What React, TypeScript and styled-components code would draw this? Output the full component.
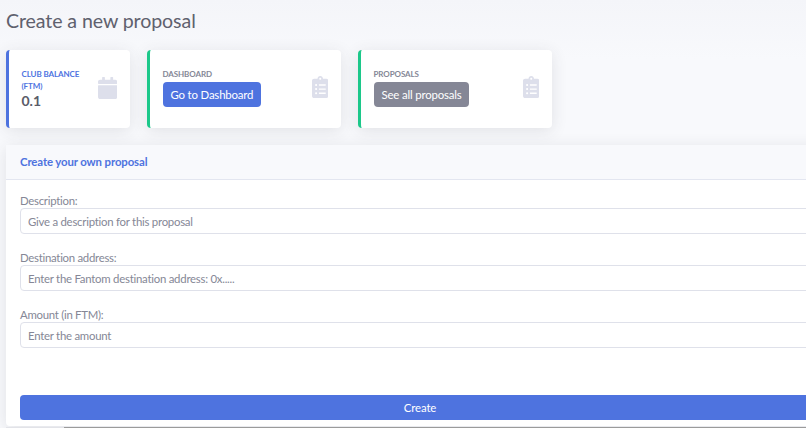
import React from "react";
import styled, { createGlobalStyle } from "styled-components";

const Global = createGlobalStyle`
  html, body { margin: 0; padding: 0; background: #f8f9fc; overflow: hidden; }
  * { box-sizing: border-box; }
`;

const Page = styled.div`
  width: 806px;
  height: 428px;
  overflow: hidden;
  display: flex;
  flex-direction: column;
  padding: 0 0 0 6px;
  font-family: "Lato", "Noto Sans", sans-serif;
  color: #858796;
  background: linear-gradient(#f4f5f9 0, #f8f9fc 60px);
`;

const Title = styled.h1`
  margin: 9px 0 0;
  height: 24px;
  font-size: 19.6px;
  line-height: 24px;
  font-weight: 400;
  letter-spacing: -0.1px;
  color: #5f616e;
`;

const CardRow = styled.div`
  display: flex;
  gap: 17px;
  margin-top: 17px;
`;

const StatCard = styled.div<{ $accent: string; $width: number }>`
  width: ${(p) => p.$width}px;
  height: 78px;
  flex: none;
  display: flex;
  align-items: center;
  justify-content: space-between;
  padding: 0 13px 0 12.5px;
  background: #fff;
  border-left: 3.5px solid ${(p) => p.$accent};
  border-radius: 4px;
  box-shadow: 0 3px 16px rgba(58, 59, 69, 0.12);
`;

const StatBody = styled.div`
  display: flex;
  flex-direction: column;
  align-items: flex-start;
`;

const StatLabel = styled.div<{ $primary?: boolean }>`
  font-size: 8px;
  line-height: 11.5px;
  font-weight: 700;
  letter-spacing: -0.1px;
  text-transform: uppercase;
  color: ${(p) => (p.$primary ? "#4e73df" : "#858796")};
`;

const StatValue = styled.div`
  font-size: 14px;
  line-height: 18px;
  margin-bottom: -1px;
  font-weight: 700;
  color: #5a5c69;
`;

const LinkButton = styled.a<{ $bg: string }>`
  display: block;
  height: 25px;
  margin: 1px 0 2px;
  padding: 0 8px;
  font-size: 11.4px;
  line-height: 25px;
  letter-spacing: -0.17px;
  color: #fff;
  background: ${(p) => p.$bg};
  border-radius: 4px;
`;

const IconSlot = styled.svg<{ $width: number; $lift: number }>`
  width: ${(p) => p.$width}px;
  height: 22px;
  margin-bottom: ${(p) => p.$lift}px;
  flex: none;
  fill: #dddfeb;
`;

const FormCard = styled.section`
  width: 828px;
  flex: none;
  margin-top: 17px;
  padding-bottom: 6px;
  background: #fff;
  border-radius: 4px 0 0 4px;
  box-shadow: 0 3px 16px rgba(58, 59, 69, 0.12);
`;

const FormHeader = styled.header`
  height: 35px;
  padding: 0 14px 1px;
  display: flex;
  align-items: center;
  background: #f8f9fc;
  border-bottom: 1px solid #e3e6f0;
  font-size: 11.4px;
  letter-spacing: -0.12px;
  font-weight: 700;
  color: #4e73df;
`;

const FormBody = styled.form`
  display: flex;
  flex-direction: column;
  padding: 13px 14px 0;
`;

const Field = styled.label`
  display: flex;
  flex-direction: column;
  height: 57px;
  font-size: 11.4px;
  line-height: 15px;
  letter-spacing: -0.28px;
  color: #858796;
`;

const Input = styled.input`
  width: 100%;
  height: 26px;
  flex: none;
  padding: 0 7px;
  font: inherit;
  letter-spacing: -0.25px;
  color: #6e707e;
  background: #fff;
  border: 1px solid #dfe1ea;
  border-radius: 4px;
  outline: none;
  &::placeholder { color: #858796; opacity: 1; }
`;

const Submit = styled.button`
  width: 100%;
  height: 25px;
  margin-top: 31px;
  padding: 0;
  font: inherit;
  font-size: 11.4px;
  letter-spacing: -0.1px;
  color: #fff;
  background: #4e73df;
  border: none;
  border-radius: 4px;
`;

const CutOffEdge = styled.div`
  height: 1px;
  flex: none;
  margin: auto 0 0 0;
  background: linear-gradient(90deg, #e2e3e8 58px, #9b9b9b 58px);
`;

const Calendar = () => (
  <IconSlot $width={19.25} $lift={2} viewBox="0 0 448 512" aria-hidden="true">
    <path d="M12 192h424c6.600 0 12 5.400 12 12v260c0 26.500-21.500 48-48 48H48c-26.500 0-48-21.500-48-48V204c0-6.600 5.400-12 12-12zm436-44v-36c0-26.500-21.500-48-48-48h-48V12c0-6.600-5.400-12-12-12h-40c-6.600 0-12 5.400-12 12v52H160V12c0-6.600-5.400-12-12-12h-40c-6.600 0-12 5.400-12 12v52H48C21.500 64 0 85.500 0 112v36c0 6.600 5.400 12 12 12h424c6.600 0 12-5.400 12-12z" />
  </IconSlot>
);

const Clipboard = () => (
  <IconSlot $width={16.5} $lift={4} viewBox="0 0 384 512" aria-hidden="true">
    <path d="M336 64h-80c0-35.300-28.700-64-64-64s-64 28.700-64 64H48C21.500 64 0 85.500 0 112v352c0 26.500 21.500 48 48 48h288c26.500 0 48-21.500 48-48V112c0-26.500-21.500-48-48-48zM96 424c-13.300 0-24-10.700-24-24s10.700-24 24-24 24 10.700 24 24-10.700 24-24 24zm0-96c-13.300 0-24-10.700-24-24s10.700-24 24-24 24 10.700 24 24-10.700 24-24 24zm0-96c-13.300 0-24-10.700-24-24s10.700-24 24-24 24 10.700 24 24-10.700 24-24 24zm96-192c13.300 0 24 10.700 24 24s-10.700 24-24 24-24-10.700-24-24 10.700-24 24-24zm128 368c0 4.400-3.600 8-8 8H168c-4.400 0-8-3.600-8-8v-16c0-4.400 3.600-8 8-8h144c4.400 0 8 3.600 8 8v16zm0-96c0 4.400-3.600 8-8 8H168c-4.400 0-8-3.600-8-8v-16c0-4.400 3.600-8 8-8h144c4.400 0 8 3.600 8 8v16zm0-96c0 4.400-3.600 8-8 8H168c-4.400 0-8-3.600-8-8v-16c0-4.400 3.600-8 8-8h144c4.400 0 8 3.600 8 8v16z" />
  </IconSlot>
);

export default function App() {
  return (
    <Page>
      <Global />
      <Title>Create a new proposal</Title>
      <CardRow>
        <StatCard $accent="#4e73df" $width={124}>
          <StatBody>
            <StatLabel $primary>
              Club Balance
              <br />
              (FTM)
            </StatLabel>
            <StatValue>0.1</StatValue>
          </StatBody>
          <Calendar />
        </StatCard>
        <StatCard $accent="#1cc88a" $width={194}>
          <StatBody>
            <StatLabel>Dashboard</StatLabel>
            <LinkButton $bg="#4e73df">Go to Dashboard</LinkButton>
          </StatBody>
          <Clipboard />
        </StatCard>
        <StatCard $accent="#1cc88a" $width={194}>
          <StatBody>
            <StatLabel>Proposals</StatLabel>
            <LinkButton $bg="#858796">See all proposals</LinkButton>
          </StatBody>
          <Clipboard />
        </StatCard>
      </CardRow>
      <FormCard>
        <FormHeader>Create your own proposal</FormHeader>
        <FormBody>
          <Field>
            Description:
            <Input placeholder="Give a description for this proposal" />
          </Field>
          <Field>
            Destination address:
            <Input placeholder="Enter the Fantom destination address: 0x....." />
          </Field>
          <Field>
            Amount (in FTM):
            <Input placeholder="Enter the amount" />
          </Field>
          <Submit type="button">Create</Submit>
        </FormBody>
      </FormCard>
      <CutOffEdge />
    </Page>
  );
}
